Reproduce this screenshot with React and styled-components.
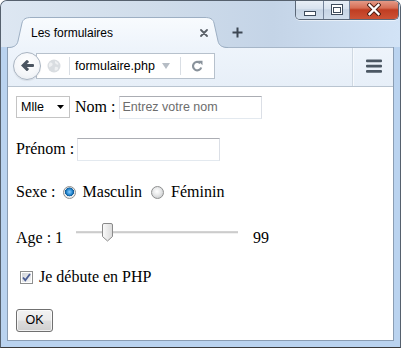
import React from 'react';
import styled, { createGlobalStyle } from 'styled-components';

const UI = `"Liberation Sans", Arial, sans-serif`;
const SERIF = `"Liberation Serif", "Times New Roman", serif`;

const Global = createGlobalStyle`
  html, body { margin: 0; padding: 0; width: 401px; height: 348px; overflow: hidden; background: #fff; }
  * { box-sizing: border-box; }
`;

const Window = styled.div`
  width: 401px;
  height: 348px;
  display: flex;
  flex-direction: column;
  border: 1px solid #56616e;
  border-bottom-color: #3a3a3a;
  border-radius: 7px 7px 0 0;
  background: #bad3ef;
  overflow: hidden;
`;

const TitleBar = styled.div`
  height: 46px;
  flex-shrink: 0;
  display: flex;
  align-items: flex-end;
  padding-left: 7px;
  background: linear-gradient(to right, #dde7f2 0%, #cfdcea 40%, #c4d4e7 68%, #d2e3f6 100%);
`;

const TabStrip = styled.div`
  display: flex;
  align-items: center;
  margin-bottom: -1px;
  position: relative;
  z-index: 2;
`;

const Tab = styled.div`
  position: relative;
  width: 220px;
  height: 31px;
  display: flex;
  align-items: center;
  padding-left: 23px;
  font: 12px ${UI};
  color: #000;
`;

const TabShape = styled.svg`
  position: absolute;
  left: 0;
  top: 0;
  z-index: -1;
`;

const TabTitle = styled.span`
  flex: 1;
`;

const TabClose = styled.svg`
  margin-right: 20px;
`;

const NewTab = styled.svg`
  margin-left: 4px;
`;

const Controls = styled.div`
  margin-left: auto;
  margin-right: 1px;
  margin-top: -1px;
  align-self: flex-start;
  display: flex;
  height: 20px;
  border: 1px solid #5b6878;
  border-top: none;
  border-radius: 0 0 5px 5px;
  overflow: hidden;
  box-shadow: 0 1px 0 rgba(255, 255, 255, 0.55);
`;

const CtrlBtn = styled.div`
  width: ${p => p.$w}px;
  display: flex;
  align-items: center;
  justify-content: center;
  background: ${p =>
    p.$close
      ? 'linear-gradient(#e6a08e 0%, #d66e55 42%, #c03d22 52%, #cc5336 100%)'
      : 'linear-gradient(#eaf0f7 0%, #d9e3ef 45%, #c6d4e4 52%, #d1deec 100%)'};
  & + & { border-left: 1px solid #75849a; }
`;

const Body = styled.div`
  flex: 1;
  margin: 0 6px 6px;
  border: 1px solid #8a9db3;
  border-top: none;
  display: flex;
  flex-direction: column;
  background: #fff;
  min-height: 0;
`;

const Toolbar = styled.div`
  height: 40px;
  flex-shrink: 0;
  display: flex;
  align-items: center;
  padding: 0 0 3px 5px;
  border-top: 1px solid #a6b6c8;
  border-bottom: 1px solid #b9c4d0;
  background: linear-gradient(#eef4fb, #e7eff8);
`;

const BackButton = styled.div`
  position: relative;
  z-index: 1;
  width: 28px;
  height: 28px;
  border-radius: 50%;
  border: 1px solid #a9b4c1;
  background: radial-gradient(circle at 50% 35%, #ffffff 0%, #f4f6f9 60%, #e4e9ef 100%);
  display: flex;
  align-items: center;
  justify-content: center;
  box-shadow: 0 1px 1px rgba(0, 0, 0, 0.08);
`;

const UrlBar = styled.div`
  margin-left: -5px;
  width: 179px;
  height: 26px;
  border: 1px solid #b7c1cc;
  background: #fff;
  display: flex;
  align-items: center;
  padding: 0 11px 0 10px;
`;

const UrlSep = styled.span`
  width: 1px;
  height: 18px;
  background: #d9dee4;
  margin-left: ${p => p.$ml}px;
`;

const UrlText = styled.span`
  flex: 1;
  margin-left: 5px;
  font: 12.5px ${UI};
  color: #000;
  white-space: nowrap;
`;

const UrlIcon = styled.svg`
  margin-left: ${p => p.$ml || 0}px;
  flex-shrink: 0;
`;

const ToolSep = styled.span`
  margin-left: auto;
  align-self: stretch;
  margin-bottom: -3px;
  width: 1px;
  background: #cfd8e2;
  box-shadow: 1px 0 0 #f6f9fc;
`;

const Menu = styled.svg`
  margin: 0 11px 0 13px;
`;

const Content = styled.div`
  flex: 1;
  background: #fff;
  padding: 8px 8px;
  display: flex;
  flex-direction: column;
  font: 16px ${SERIF};
  color: #000;
`;

const Row = styled.div`
  display: flex;
  align-items: center;
  height: 24px;
  margin-top: ${p => p.$mt || 0}px;
  white-space: pre;
`;

const Label = styled.span`
  margin-left: ${p => p.$ml || 0}px;
  margin-right: ${p => p.$mr || 0}px;
`;

const SelectBox = styled.div`
  width: 54px;
  height: 22px;
  border: 1px solid #c4c4c4;
  background: #fff;
  display: flex;
  align-items: center;
  padding: 0 5px 0 4px;
  font: 12.5px ${UI};
  color: #000;
`;

const SelectValue = styled.span`
  flex: 1;
`;

const TextInput = styled.div`
  width: 143px;
  height: 23px;
  border: 1px solid;
  border-color: #abadb3 #dbdfe6 #e3e9ef #e2e3ea;
  background: #fff;
  display: flex;
  align-items: center;
  padding-left: 2px;
  font: 12.5px ${UI};
  color: #6d6d6d;
`;

const Radio = styled.span`
  width: 13px;
  height: 13px;
  border-radius: 50%;
  margin-left: ${p => p.$ml || 0}px;
  margin-right: ${p => p.$mr || 0}px;
  border: 1px solid #8e8f8f;
  background: ${p =>
    p.$checked
      ? 'radial-gradient(circle at 50% 45%, #8fd0ff 0%, #2f8fd6 32%, #0c5a98 52%, #e8eaec 57%, #f4f4f4 100%)'
      : 'radial-gradient(circle at 45% 40%, #ffffff 0%, #e6e7e8 45%, #cfd1d3 75%, #f0f0f0 100%)'};
  flex-shrink: 0;
`;

const Slider = styled.svg`
  align-self: flex-start;
  margin-top: -3px;
  margin-left: ${p => p.$ml}px;
  margin-right: ${p => p.$mr}px;
  flex-shrink: 0;
`;

const Check = styled.svg`
  margin-left: 4px;
  margin-right: 6px;
  flex-shrink: 0;
`;

const Button = styled.div`
  width: 37px;
  height: 23px;
  border: 1px solid #707070;
  border-radius: 3px;
  background: linear-gradient(#f2f2f2 0%, #ebebeb 48%, #dddddd 52%, #cfcfcf 100%);
  box-shadow: inset 0 0 0 1px rgba(255, 255, 255, 0.7);
  display: flex;
  align-items: center;
  justify-content: center;
  font: 12.5px ${UI};
  color: #000;
`;

export default function App() {
  return (
    <>
      <Global />
      <Window>
        <TitleBar>
          <TabStrip>
            <Tab>
              <TabShape width="220" height="31" viewBox="0 0 220 31">
                <defs>
                  <linearGradient id="tabg" x1="0" y1="0" x2="0" y2="1">
                    <stop offset="0" stopColor="#f8fbfe" />
                    <stop offset="1" stopColor="#eef4fb" />
                  </linearGradient>
                </defs>
                <path
                  d="M0,31 C5,31 9,29 10,24 L14,6 C15,2 18,0.5 23,0.5 L197,0.5 C202,0.5 205,2 206,6 L210,24 C211,29 215,31 220,31 Z"
                  fill="url(#tabg)"
                />
                <path
                  d="M0,30.5 C5,30.5 9,29 10,24 L14,6 C15,2 18,0.5 23,0.5 L197,0.5 C202,0.5 205,2 206,6 L210,24 C211,29 215,30.5 220,30.5"
                  fill="none"
                  stroke="#9dafc3"
                  strokeWidth="1"
                />
              </TabShape>
              <TabTitle>Les formulaires</TabTitle>
              <TabClose width="8" height="8" viewBox="0 0 8 8">
                <path d="M1,1 L7,7 M7,1 L1,7" stroke="#5b6168" strokeWidth="1.8" strokeLinecap="round" />
              </TabClose>
            </Tab>
            <NewTab width="11" height="11" viewBox="0 0 11 11">
              <path d="M5.5,0.5 V10.5 M0.5,5.5 H10.5" stroke="#3d4753" strokeWidth="2" />
            </NewTab>
          </TabStrip>
          <Controls>
            <CtrlBtn $w={27}>
              <svg width="12" height="20" viewBox="0 0 12 20">
                <rect x="0.5" y="11.5" width="11" height="4" fill="#fff" stroke="#3e4c5c" />
              </svg>
            </CtrlBtn>
            <CtrlBtn $w={26}>
              <svg width="12" height="12" viewBox="0 0 12 12">
                <rect x="0.5" y="0.5" width="11" height="10" fill="#fff" stroke="#3e4c5c" />
                <rect x="2.5" y="3.5" width="7" height="5" fill="#fff" stroke="#3e4c5c" />
              </svg>
            </CtrlBtn>
            <CtrlBtn $w={49} $close>
              <svg width="14" height="13" viewBox="0 0 14 13">
                <path d="M2.5,2 L11.5,11 M11.5,2 L2.5,11" stroke="#4a1e14" strokeWidth="4.2" strokeLinecap="square" />
                <path d="M2.5,2 L11.5,11 M11.5,2 L2.5,11" stroke="#ffffff" strokeWidth="2.3" strokeLinecap="square" />
              </svg>
            </CtrlBtn>
          </Controls>
        </TitleBar>
        <Body>
          <Toolbar>
            <BackButton>
              <svg width="15" height="13" viewBox="0 0 15 13">
                <path
                  d="M1,6.5 L6.3,1.2 Q6.9,0.6 7.6,1.2 L8.6,2.2 Q9.2,2.8 8.6,3.4 L6.8,5 H13 Q14,5 14,6 V7 Q14,8 13,8 H6.8 L8.6,9.6 Q9.2,10.2 8.6,10.8 L7.6,11.8 Q6.9,12.4 6.3,11.8 Z"
                  fill="#4b5561"
                />
              </svg>
            </BackButton>
            <UrlBar>
              <UrlIcon width="14" height="14" viewBox="0 0 14 14">
                <circle cx="7" cy="7" r="6.5" fill="#d9dde1" />
                <path d="M3,3.5 C5,3 6,4.5 5.5,6 C5,7.5 3.5,7 2.5,8.5 C1.5,7 1.5,5 3,3.5 Z" fill="#eef0f2" />
                <path d="M8,2 C10,2.5 11.5,4 11.5,5.5 C10,6 8.5,5 8,4 Z" fill="#eef0f2" />
                <path d="M8,8 C10,7.5 11.5,8.5 11,10 C10,11.5 8.5,12 7.5,11 C8,10 7.5,9 8,8 Z" fill="#eef0f2" />
              </UrlIcon>
              <UrlSep $ml={8} />
              <UrlText>formulaire.php</UrlText>
              <UrlIcon width="8" height="6" viewBox="0 0 8 6">
                <path d="M0,0 H8 L4,6 Z" fill="#b6bdc5" />
              </UrlIcon>
              <UrlSep $ml={10} />
              <UrlIcon $ml={10} width="12" height="12" viewBox="0 0 12 12">
                <path d="M9.2,3.2 A4.2,4.2 0 1 0 10.2,7.5" fill="none" stroke="#89929b" strokeWidth="2.2" />
                <path d="M7,0.8 L11.5,0.8 L11.5,5.3 Z" fill="#89929b" />
              </UrlIcon>
            </UrlBar>
            <ToolSep />
            <Menu width="16" height="14" viewBox="0 0 16 14">
              <rect x="0" y="0.5" width="16" height="2.8" rx="1" fill="#4b5763" />
              <rect x="0" y="5.8" width="16" height="2.8" rx="1" fill="#4b5763" />
              <rect x="0" y="11" width="16" height="2.8" rx="1" fill="#4b5763" />
            </Menu>
          </Toolbar>
          <Content>
            <Row>
              <SelectBox>
                <SelectValue>Mlle</SelectValue>
                <svg width="7" height="4" viewBox="0 0 7 4">
                  <path d="M0,0 H7 L3.5,4 Z" fill="#000" />
                </svg>
              </SelectBox>
              <Label $ml={5} $mr={4}>Nom :</Label>
              <TextInput>Entrez votre nom</TextInput>
            </Row>
            <Row $mt={18}>
              <Label $mr={3}>Prénom :</Label>
              <TextInput />
            </Row>
            <Row $mt={19}>
              <Label $mr={7}>Sexe :</Label>
              <Radio $checked $mr={7} />
              <Label>Masculin</Label>
              <Radio $ml={9} $mr={7} />
              <Label>Féminin</Label>
            </Row>
            <Row $mt={22}>
              <Label>Age : 1</Label>
              <Slider $ml={13} $mr={15} width="162" height="20" viewBox="0 0 162 20">
                <rect x="0" y="8.5" width="162" height="1.2" fill="#a8a8a8" />
                <rect x="0" y="9.7" width="162" height="0.8" fill="#e4e4e4" />
                <defs>
                  <linearGradient id="thumbg" x1="0" y1="0" x2="1" y2="0">
                    <stop offset="0" stopColor="#fbfbfb" />
                    <stop offset="1" stopColor="#dadada" />
                  </linearGradient>
                </defs>
                <path
                  d="M26.5,2 Q26.5,0.5 28,0.5 L35,0.5 Q36.5,0.5 36.5,2 L36.5,13.5 L31.5,18 L26.5,13.5 Z"
                  fill="url(#thumbg)"
                  stroke="#8a8a8a"
                  strokeWidth="1"
                />
              </Slider>
              <Label>99</Label>
            </Row>
            <Row $mt={15}>
              <Check width="13" height="13" viewBox="0 0 13 13">
                <defs>
                  <linearGradient id="chk" x1="0" y1="0" x2="1" y2="1">
                    <stop offset="0" stopColor="#cfd3d8" />
                    <stop offset="1" stopColor="#f7f7f7" />
                  </linearGradient>
                </defs>
                <rect x="0.5" y="0.5" width="12" height="12" fill="#fff" stroke="#8e8f8f" />
                <rect x="2" y="2" width="9" height="9" fill="url(#chk)" />
                <path d="M3,6.5 L5.3,9.2 L10,3" fill="none" stroke="#4a5d94" strokeWidth="1.8" />
              </Check>
              <Label>Je débute en PHP</Label>
            </Row>
            <Row $mt={19}>
              <Button>OK</Button>
            </Row>
          </Content>
        </Body>
      </Window>
    </>
  );
}
